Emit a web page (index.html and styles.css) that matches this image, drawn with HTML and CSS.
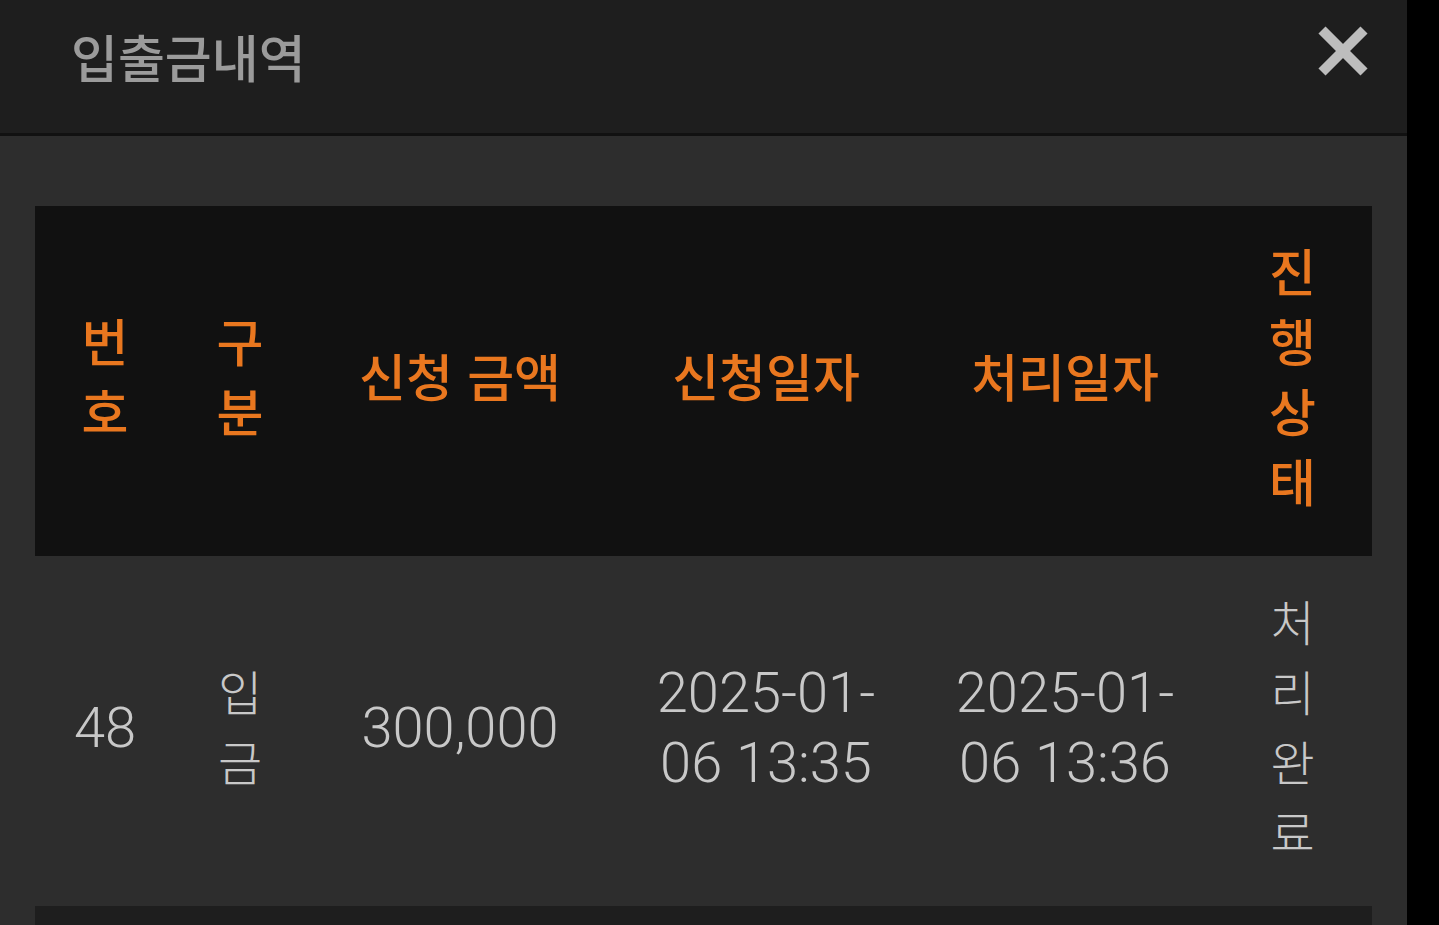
FILE: index.html
```html
<!DOCTYPE html>
<html lang="ko">
<head>
    <meta charset="utf-8">
    <title>입출금내역</title>
    <link rel="stylesheet" href="styles.css">
</head>
<body>
    <div class="page">
        <header class="topbar">
            <h1 class="title">입출금내역</h1>
            <button class="close" aria-label="닫기">
                <svg width="54" height="54" viewBox="0 0 54 54">
                    <line x1="6" y1="6" x2="48" y2="48" />
                    <line x1="48" y1="6" x2="6" y2="48" />
                </svg>
            </button>
        </header>

        <main class="content">
            <table class="history">
                <colgroup>
                    <col class="c-no">
                    <col class="c-type">
                    <col class="c-amount">
                    <col class="c-req">
                    <col class="c-done">
                    <col class="c-state">
                </colgroup>
                <thead>
                    <tr>
                        <th>번호</th>
                        <th>구분</th>
                        <th>신청 금액</th>
                        <th>신청일자</th>
                        <th>처리일자</th>
                        <th class="state">진행상태</th>
                    </tr>
                </thead>
                <tbody>
                    <tr>
                        <td class="num">48</td>
                        <td class="kr">입금</td>
                        <td class="num">300,000</td>
                        <td class="num">2025-01-<wbr>06 13:35</td>
                        <td class="num">2025-01-<wbr>06 13:36</td>
                        <td class="kr state">처리완료</td>
                    </tr>
                    <!-- next row, scrolled below the fold -->
                    <tr class="more">
                        <td></td><td></td><td></td><td></td><td></td><td></td>
                    </tr>
                </tbody>
            </table>
        </main>
    </div>
</body>
</html>
```

FILE: styles.css
```css
html, body {
    margin: 0;
    height: 100%;
}

body {
    background: #000;
    overflow: hidden;
    font-family: "Noto Sans CJK KR", "Noto Sans", sans-serif;
}

.page {
    width: 1407px;
    height: 100%;
    background: #2d2d2d;
}

/* top bar */
.topbar {
    height: 133px;
    background: #1e1e1e;
    border-bottom: 3px solid #111;
    display: flex;
    justify-content: space-between;
    align-items: flex-start;
    padding: 0 37px 0 71px;
}

.title {
    margin: 0;
    padding-top: 31px;
    font-size: 51px;
    line-height: 51px;
    font-weight: 500;
    color: #9b9b9b;
}

.close {
    margin-top: 24px;
    padding: 0;
    border: 0;
    background: none;
    width: 54px;
    height: 54px;
}

.close svg {
    display: block;
    stroke: #bdbdbd;
    stroke-width: 10;
}

/* table */
.content {
    padding: 70px 35px 0;
}

.history {
    width: 1337px;
    table-layout: fixed;
    border-collapse: collapse;
}

.c-no { width: 140px; }
.c-type { width: 130px; }
.c-amount { width: 310px; }
.c-req { width: 302px; }
.c-done { width: 296px; }
.c-state { width: 159px; }

.history th,
.history td {
    padding: 29px 35px 41px;
    text-align: center;
    vertical-align: middle;
    line-height: 70px;
}

.history .state {
    padding-left: 50px;
    padding-right: 50px;
}

.history thead tr {
    background: #111;
}

.history th {
    font-size: 51px;
    font-weight: 500;
    color: #e9771f;
}

.history tbody tr:nth-child(even) {
    background: #1e1e1e;
}

.history tr.more td {
    height: 70px;
}

.history td {
    color: #c8c8c8;
}

.history td.num {
    padding-top: 32px;
    padding-bottom: 38px;
    font-family: Roboto, "Noto Sans CJK KR", sans-serif;
    font-size: 56px;
    font-weight: 300;
}

.history td.kr {
    font-size: 48px;
    font-weight: 300;
}
```
